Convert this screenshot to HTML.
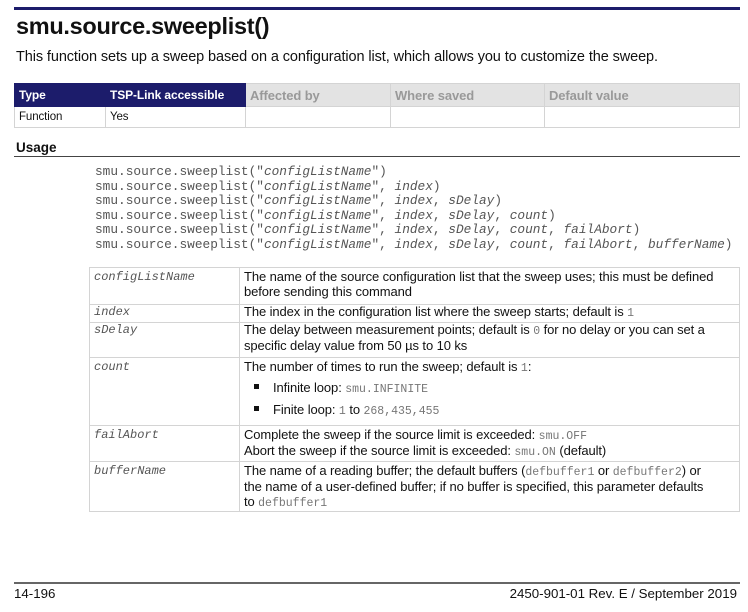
<!DOCTYPE html>
<html><head><meta charset="utf-8"><style>
body{margin:0;width:748px;height:612px;background:#fff;position:relative;font-family:"Liberation Sans",sans-serif;color:#111;overflow:hidden}
.a{position:absolute;white-space:nowrap}
table{border-collapse:collapse;position:absolute}
td{border:1px solid #d4d4d4;vertical-align:top;padding:0 4px;font-size:13px;letter-spacing:-0.1px}
.code{position:absolute;left:95px;top:165px;font-family:"Liberation Mono",monospace;font-size:12.8px;line-height:14.5px;color:#555;white-space:pre}
.code i{color:#555}
.g{font-family:"Liberation Mono",monospace;color:#777;font-size:11.5px;letter-spacing:0}
.p{font-family:"Liberation Mono",monospace;font-style:italic;color:#555;font-size:12px;letter-spacing:0}
</style></head><body>
<div class="a" style="left:14px;top:7px;width:726px;height:3px;background:#1c1c6b"></div>
<div class="a" style="left:16px;top:13px;font-size:23.5px;font-weight:bold;letter-spacing:-0.3px">smu.source.sweeplist()</div>
<div class="a" style="left:16px;top:49px;font-size:14.5px;letter-spacing:-0.1px">This function sets up a sweep based on a configuration list, which allows you to customize the sweep.</div>
<table style="left:14px;top:83px;width:726px">
<tr style="height:23px;font-weight:bold">
<td style="width:82px;background:#1c1c6b;color:#fff;border-color:#1c1c6b;vertical-align:middle;font-size:12px">Type</td>
<td style="width:131px;background:#1c1c6b;color:#fff;border-color:#1c1c6b;vertical-align:middle;font-size:12px">TSP-Link accessible</td>
<td style="width:136px;background:#e3e3e3;color:#999;vertical-align:middle">Affected by</td>
<td style="width:145px;background:#e3e3e3;color:#999;vertical-align:middle">Where saved</td>
<td style="background:#e3e3e3;color:#999;vertical-align:middle">Default value</td></tr>
<tr style="height:21px"><td style="font-size:11.5px;vertical-align:middle">Function</td><td style="font-size:11.5px;vertical-align:middle">Yes</td><td></td><td></td><td></td></tr>
</table>
<div class="a" style="left:16px;top:140px;font-size:13.5px;font-weight:bold">Usage</div>
<div class="a" style="left:14px;top:156px;width:726px;height:1px;background:#444"></div>
<div class="code">smu.source.sweeplist("<i>configListName</i>")
smu.source.sweeplist("<i>configListName</i>", <i>index</i>)
smu.source.sweeplist("<i>configListName</i>", <i>index</i>, <i>sDelay</i>)
smu.source.sweeplist("<i>configListName</i>", <i>index</i>, <i>sDelay</i>, <i>count</i>)
smu.source.sweeplist("<i>configListName</i>", <i>index</i>, <i>sDelay</i>, <i>count</i>, <i>failAbort</i>)
smu.source.sweeplist("<i>configListName</i>", <i>index</i>, <i>sDelay</i>, <i>count</i>, <i>failAbort</i>, <i>bufferName</i>)</div>
<table style="left:89px;top:267px;width:651px;line-height:14.5px">
<tr style="height:37px"><td class="p" style="width:141px;padding-top:2px">configListName</td><td style="padding-top:2px">The name of the source configuration list that the sweep uses; this must be defined<br>before sending this command</td></tr>
<tr style="height:17px"><td class="p">index</td><td>The index in the configuration list where the sweep starts; default is <span class="g">1</span></td></tr>
<tr style="height:35px"><td class="p">sDelay</td><td>The delay between measurement points; default is <span class="g">0</span> for no delay or you can set a<br>specific delay value from 50 µs to 10 ks</td></tr>
<tr style="height:68px"><td class="p" style="padding-top:2px">count</td><td style="padding-top:2px">The number of times to run the sweep; default is <span class="g">1</span>:
<div style="margin-top:5px;padding-left:10px"><span style="display:inline-block;width:5px;height:5px;background:#111;margin-right:14px;vertical-align:3px"></span>Infinite loop: <span class="g">smu.INFINITE</span></div>
<div style="margin-top:5px;padding-left:10px"><span style="display:inline-block;width:5px;height:5px;background:#111;margin-right:14px;vertical-align:3px"></span>Finite loop: <span class="g">1</span> to <span class="g">268,435,455</span></div></td></tr>
<tr style="height:36px"><td class="p" style="padding-top:2px">failAbort</td><td style="padding-top:2px">Complete the sweep if the source limit is exceeded: <span class="g">smu.OFF</span><br>Abort the sweep if the source limit is exceeded: <span class="g">smu.ON</span> (default)</td></tr>
<tr style="height:49px"><td class="p" style="padding-top:2px">bufferName</td><td style="padding-top:2px">The name of a reading buffer; the default buffers (<span class="g">defbuffer1</span> or <span class="g">defbuffer2</span>) or<br>the name of a user-defined buffer; if no buffer is specified, this parameter defaults<br>to <span class="g">defbuffer1</span></td></tr>
</table>
<div class="a" style="left:14px;top:582px;width:726px;height:2px;background:#666"></div>
<div class="a" style="left:14px;top:586px;font-size:13.3px">14-196</div>
<div class="a" style="right:11px;top:586px;font-size:13.3px">2450-901-01 Rev. E / September 2019</div>
</body></html>
